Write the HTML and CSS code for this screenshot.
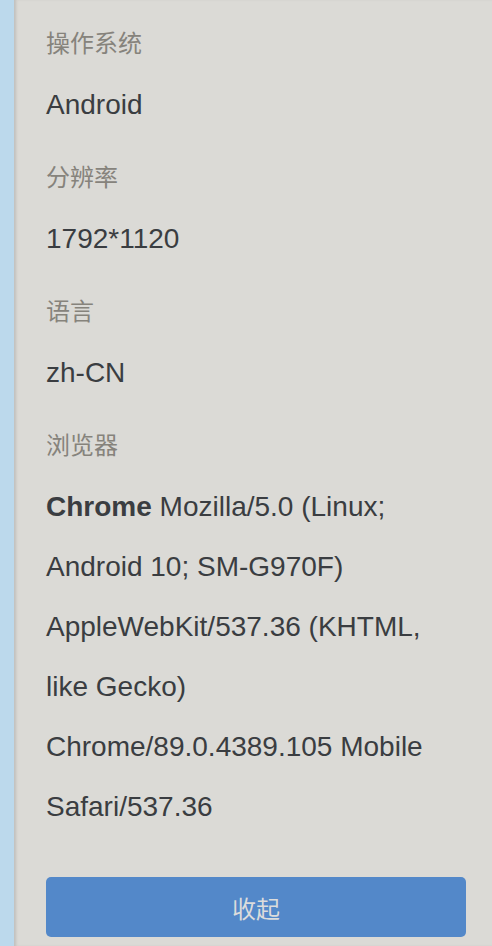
FILE: index.html
```html
<!DOCTYPE html>
<html lang="zh-CN">
<head>
<meta charset="utf-8">
<title>设备信息</title>
<link rel="stylesheet" href="styles.css">
</head>
<body>
<div class="page">
  <aside class="strip"></aside>
  <main class="panel">
    <dl class="info">
      <div class="item">
        <dt class="label">操作系统</dt>
        <dd class="value">Android</dd>
      </div>
      <div class="item">
        <dt class="label">分辨率</dt>
        <dd class="value">1792*1120</dd>
      </div>
      <div class="item">
        <dt class="label">语言</dt>
        <dd class="value">zh-CN</dd>
      </div>
      <div class="item">
        <dt class="label">浏览器</dt>
        <dd class="value"><b class="brand">Chrome</b> Mozilla/5.0 (Linux; Android 10; SM-G970F) AppleWebKit/537.36 (KHTML, like Gecko) Chrome/89.0.4389.105 Mobile Safari/537.36</dd>
      </div>
    </dl>
    <button class="collapse" type="button">收起</button>
  </main>
</div>
</body>
</html>
```

FILE: styles.css
```css
html, body {
  margin: 0;
  padding: 0;
  height: 100%;
}
body {
  font-family: "Liberation Sans", "Noto Sans CJK SC", Arial, sans-serif;
  background: #dbdad6;
  overflow: hidden;
}
.page {
  display: flex;
  height: 946px;
}
.strip {
  width: 14px;
  flex: none;
  background: #bcd9ec;
}
.panel {
  flex: 1;
  background: #dbdad6;
  box-shadow: inset 3px 0 3px -1px rgba(0, 0, 0, 0.12);
  padding: 1px 26px 0 32px;
  display: flex;
  flex-direction: column;
}
.info {
  margin: 0;
  display: flex;
  flex-direction: column;
}
.item {
  padding-top: 23px;
}
.label {
  font-family: "Noto Sans CJK SC", "Liberation Sans", sans-serif;
  font-size: 24px;
  line-height: 36px;
  color: #86837c;
  margin: 0 0 15px;
}
.value {
  margin: 0;
  font-size: 28px;
  line-height: 60px;
  color: #3a3d41;
}
.brand {
  font-weight: bold;
}
.collapse {
  margin-top: 40px;
  height: 60px;
  width: 100%;
  border: none;
  border-radius: 5px;
  background: #5388c9;
  color: #dcdcdc;
  font-family: "Noto Sans CJK SC", sans-serif;
  font-size: 24px;
  cursor: pointer;
}
```
